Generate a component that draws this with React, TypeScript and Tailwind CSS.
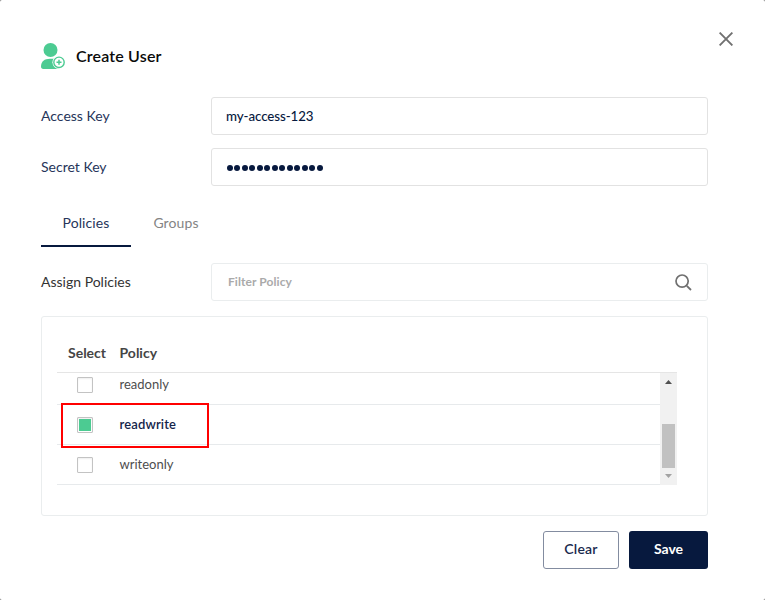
import React from "react";

function Field({ label, children }: { label: string; children: React.ReactNode }) {
  return (
    <div className="flex h-[38px] items-center">
      <div className="w-[170px] pb-[2px] text-[14px] text-[#26355a]">{label}</div>
      <div className="flex h-full flex-1 items-center rounded-[3px] border border-[#e2e2e2] pl-[14px] pt-[2px] text-[13.3px] font-medium tracking-[-0.08px] text-[#07193e]">
        {children}
      </div>
    </div>
  );
}

function Row({ name, checked, height }: { name: string; checked?: boolean; height: string }) {
  return (
    <div className={`flex items-end border-b border-[#e7eaec] ${height}`}>
      <div className="flex h-[39px] items-center">
        <div className="ml-[20px] mt-px flex size-4 items-center justify-center rounded-[1px] border border-[#c3c3c3] bg-white shadow-[inset_0_1px_2px_#eeeeee]">
          {checked && <div className="size-3 bg-[#4ccb92]" />}
        </div>
        <div className={`ml-[26.5px] text-[13px] ${checked ? "font-semibold tracking-[0.15px] text-[#13244a]" : "text-[#4d4d4d]"}`}>
          {name}
        </div>
      </div>
    </div>
  );
}

export default function App() {
  return (
    <div className="h-[600px] w-[765px] bg-[#777]">
      <div className="relative h-full rounded-[2px] bg-white pl-[41px] pr-[57px] pt-[42px] font-['Lato',sans-serif]">
        <svg className="absolute left-[719px] top-[32px]" width="14" height="14" viewBox="0 0 14 14" fill="none" stroke="#707070" strokeWidth="1.9">
          <path d="M0.6 0.6 13.4 13.4M13.4 0.6 0.6 13.4" />
        </svg>

        <div className="flex h-[28px] items-center">
          <svg width="24" height="28" viewBox="0 0 24 28">
            <circle cx="9.5" cy="8" r="7" fill="#4ccb92" />
            <path d="M0 24.5C0 19.5 3.6 16.8 9 16.8h9V27H2.3C.8 27 0 26 0 24.5Z" fill="#4ccb92" />
            <circle cx="18" cy="20.3" r="6.6" fill="#fff" />
            <circle cx="18" cy="20.3" r="5.2" fill="#fff" stroke="#4ccb92" strokeWidth="1.4" />
            <path d="M18 17.8v5M15.5 20.3h5" stroke="#4ccb92" strokeWidth="1.5" />
          </svg>
          <h1 className="ml-[11px] text-[16px] font-semibold tracking-[0.17px] text-[#0a0a0a]">Create User</h1>
        </div>

        <div className="mt-[27px] flex flex-col gap-[13px]">
          <Field label="Access Key">my-access-123</Field>
          <Field label="Secret Key">
            <div className="flex gap-[1.5px] pl-[0.7px]">
              {Array.from({ length: 13 }, (_, i) => (
                <span key={i} className="h-[6.5px] w-[6px] rounded-full bg-[#07193e]" />
              ))}
            </div>
          </Field>
        </div>

        <div className="mt-[14px] flex h-[47px] text-[14px] tracking-[0.1px]">
          <div className="flex w-[90px] items-center justify-center border-b-2 border-[#07193e] text-[#26355a]">Policies</div>
          <div className="flex w-[90px] items-center justify-center border-b-2 border-transparent text-[#848484]">Groups</div>
        </div>

        <div className="mt-[16px] flex h-[38px] items-center">
          <div className="w-[170px] pb-[2px] text-[14px] text-[#333]">Assign Policies</div>
          <div className="flex h-full flex-1 items-center justify-between rounded-[3px] border border-[#eaedee] pl-4 pr-[15.5px]">
            <span className="text-[12px] font-bold tracking-[0.08px] text-[#aaa]">Filter Policy</span>
            <svg width="17" height="17" viewBox="0 0 17 17" fill="none" stroke="#707070">
              <circle cx="7.1" cy="7.1" r="6.1" strokeWidth="1.7" />
              <path d="m11.8 11.8 4.2 4.2" strokeWidth="1.8" />
            </svg>
          </div>
        </div>

        <div className="mt-[15px] h-[200px] rounded-[3px] border border-[#eaedee] px-[15px] pt-[15px]">
          <div className="w-[620px]">
            <div className="flex h-[41px] items-center border-b border-[#e5e5e5] pl-[11px] text-[14px] font-bold text-[#454545]">
              <div className="w-[51.5px]">Select</div>
              <div>Policy</div>
            </div>
            <div className="relative flex h-[112px]">
              <div className="flex-1">
                <Row name="readonly" height="h-[32px]" />
                <Row name="readwrite" height="h-[40px]" checked />
                <Row name="writeonly" height="h-[40px]" />
              </div>
              <div className="flex w-[17px] flex-col items-center bg-[#f1f1f1]">
                <svg className="mt-[7px]" width="7" height="4" viewBox="0 0 7 4" fill="#505050"><path d="M3.5 0 7 4H0Z" /></svg>
                <div className="mt-[40px] h-[44px] w-[13px] bg-[#c1c1c1]" />
                <svg className="mt-[6px]" width="7" height="4" viewBox="0 0 7 4" fill="#a3a3a3"><path d="M0 0h7L3.5 4Z" /></svg>
              </div>
              <div className="absolute left-[4px] top-[30px] h-[45px] w-[148px] border-2 border-[#ff0000]" />
            </div>
          </div>
        </div>

        <div className="mt-[15px] flex h-[38px] justify-end gap-[10px] text-[14px]">
          <button className="w-[76px] rounded-[3px] border border-[#838ca0] pb-[3px] font-semibold tracking-[0.2px] text-[#1a2a4e]">Clear</button>
          <button className="w-[79px] rounded-[3px] bg-[#07193e] pb-[3px] font-bold text-white">Save</button>
        </div>
      </div>
    </div>
  );
}
